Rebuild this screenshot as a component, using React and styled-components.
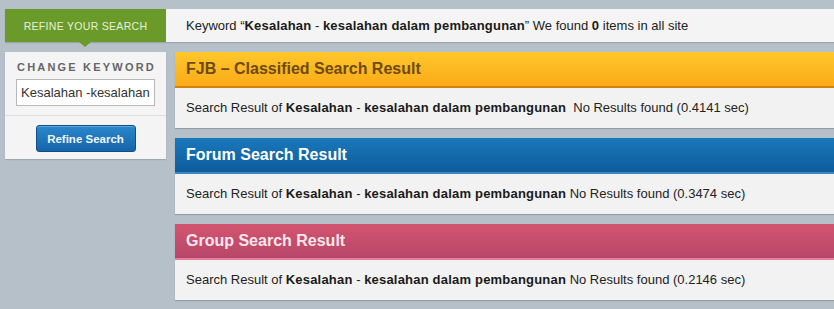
import styled, { createGlobalStyle } from "styled-components";

const GlobalStyle = createGlobalStyle`
  body {
    margin: 0;
    background: #b6c0c8;
    font-family: Arial, "Liberation Sans", sans-serif;
  }
`;

const Page = styled.div`
  padding: 9px 0 0 5px;
  height: 300px;
  overflow: hidden;
`;

const TopBar = styled.div`
  display: flex;
  align-items: stretch;
  height: 33px;
  background: #f4f4f4;
  box-shadow: 0 1px 1px rgba(0, 0, 0, 0.15);
`;

const Tab = styled.div`
  position: relative;
  width: 161px;
  background: #6a9b2a;
  color: #e6f0d6;
  font-size: 10.5px;
  text-transform: uppercase;
  display: flex;
  align-items: center;
  justify-content: center;
  letter-spacing: 0.3px;

  &::after {
    content: "";
    position: absolute;
    left: 74px;
    bottom: -5px;
    border-left: 6px solid transparent;
    border-right: 6px solid transparent;
    border-top: 5px solid #6a9b2a;
  }
`;

const Summary = styled.div`
  padding-left: 20px;
  line-height: 33px;
  font-size: 13px;
  color: #222;
  white-space: nowrap;

  b {
    color: #1a1a1a;
    letter-spacing: 0.2px;
  }
`;

const Main = styled.div`
  display: flex;
  gap: 9px;
  margin-top: 10px;
  align-items: flex-start;
`;

const Sidebar = styled.div`
  width: 161px;
  background: #f4f4f4;
  box-shadow: 0 1px 1px rgba(0, 0, 0, 0.12);
`;

const SideTop = styled.div`
  padding: 9px 11px 9px 11px;
  border-bottom: 1px solid #dcdcdc;
`;

const SideLabel = styled.div`
  font-size: 11px;
  font-weight: bold;
  letter-spacing: 2.2px;
  color: #666;
  margin-left: 1px;
  margin-bottom: 6px;
  white-space: nowrap;
`;

const Input = styled.input`
  box-sizing: border-box;
  width: 139px;
  height: 27px;
  border: 1px solid #b8b8b8;
  background: #fff;
  font-family: Arial, "Liberation Sans", sans-serif;
  font-size: 13px;
  color: #333;
  padding: 0 4px;
  outline: none;
`;

const SideBottom = styled.div`
  display: flex;
  justify-content: center;
  padding: 9px 0 7px;
`;

const Button = styled.button`
  width: 100px;
  height: 27px;
  border: 1px solid #0d4f86;
  border-radius: 3px;
  background: linear-gradient(#2b87cc, #1565a8);
  color: #f0f6fc;
  font-family: Arial, "Liberation Sans", sans-serif;
  font-size: 11.5px;
  font-weight: bold;
  box-shadow: inset 0 1px 0 rgba(255, 255, 255, 0.25);
`;

const Results = styled.div`
  flex: 1;
  display: flex;
  flex-direction: column;
  gap: 10px;
`;

const themes = {
  orange: {
    bg: "linear-gradient(#fec72c, #fbab17)",
    border: "#d2800f",
    color: "#6e4a0e",
  },
  blue: {
    bg: "linear-gradient(#1a78bb, #0e5c9c)",
    border: "#3b86c4",
    color: "#ffffff",
  },
  pink: {
    bg: "linear-gradient(#d2556f, #b8466a)",
    border: "#e2829a",
    color: "#fbe6ec",
  },
};

const Panel = styled.div`
  background: #f2f2f2;
  box-shadow: 0 1px 1px rgba(0, 0, 0, 0.18);
`;

const PanelHead = styled.div`
  height: 34px;
  line-height: 34px;
  padding-left: 11px;
  background: ${(p) => themes[p.$tone].bg};
  border-bottom: 2px solid ${(p) => themes[p.$tone].border};
  color: ${(p) => themes[p.$tone].color};
  font-size: 16px;
  font-weight: bold;
`;

const PanelBody = styled.div`
  height: 40px;
  line-height: 40px;
  padding-left: 11px;
  font-size: 13px;
  color: #222;
  white-space: pre;

  b {
    color: #1a1a1a;
    letter-spacing: 0.2px;
  }
`;

const panels = [
  { tone: "orange", title: "FJB \u2013 Classified Search Result", time: "0.4141", gap: "  " },
  { tone: "blue", title: "Forum Search Result", time: "0.3474", gap: " " },
  { tone: "pink", title: "Group Search Result", time: "0.2146", gap: " " },
];

export default function App() {
  return (
    <>
      <GlobalStyle />
      <Page>
        <TopBar>
          <Tab>Refine your search</Tab>
          <Summary>
            Keyword “<b>Kesalahan</b> - <b>kesalahan dalam pembangunan</b>” We found <b>0</b> items in all site
          </Summary>
        </TopBar>
        <Main>
          <Sidebar>
            <SideTop>
              <SideLabel>CHANGE KEYWORD</SideLabel>
              <Input defaultValue="Kesalahan -kesalahan dalam pembangunan" />
            </SideTop>
            <SideBottom>
              <Button>Refine Search</Button>
            </SideBottom>
          </Sidebar>
          <Results>
            {panels.map((p) => (
              <Panel key={p.tone}>
                <PanelHead $tone={p.tone}>{p.title}</PanelHead>
                <PanelBody>
                  {"Search Result of "}
                  <b>Kesalahan</b>
                  {" - "}
                  <b>kesalahan dalam pembangunan</b>
                  {p.gap + "No Results found (" + p.time + " sec)"}
                </PanelBody>
              </Panel>
            ))}
          </Results>
        </Main>
      </Page>
    </>
  );
}
